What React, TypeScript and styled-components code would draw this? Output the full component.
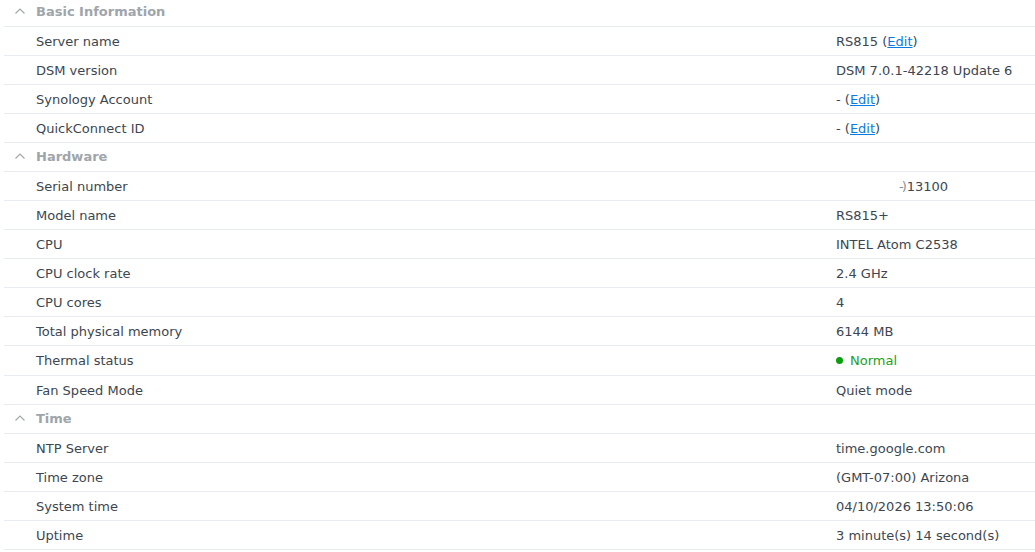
import React from "react";
import styled, { createGlobalStyle } from "styled-components";

const Global = createGlobalStyle`
  html, body { margin: 0; padding: 0; background: #ffffff; }
  body { font-family: "DejaVu Sans", Verdana, sans-serif; font-size: 13px; color: #3d4650; overflow: hidden; }
`;

const Page = styled.div`
  width: 1035px;
  height: 552px;
  overflow: hidden;
  background: #fff;
`;

const List = styled.div`
  margin-top: -2px;
  margin-left: 4px;
  display: flex;
  flex-direction: column;
`;

const Row = styled.div<{ $tall?: boolean }>`
  display: grid;
  grid-template-columns: 800px 1fr;
  align-items: center;
  height: ${(p) => (p.$tall ? "29px" : "28px")};
  padding-left: 32px;
  border-bottom: 1px solid #e7ebf0;
  white-space: nowrap;
`;

const GroupRow = styled.div`
  display: flex;
  align-items: center;
  height: 26px;
  padding-bottom: 2px;
  border-bottom: 1px solid #e7ebf0;
  padding-left: 11px;
  gap: 11px;
  font-weight: bold;
  color: #a0a5aa;
`;

const Chevron = styled.svg`
  width: 10px;
  height: 6px;
  flex: none;
`;

const Label = styled.span``;
const Value = styled.span`
  display: flex;
  align-items: center;
`;

const Link = styled.a`
  color: #0a7be0;
  text-decoration: underline;
  cursor: pointer;
`;

const Dot = styled.span`
  width: 7px;
  height: 7px;
  border-radius: 50%;
  background: #0aa00a;
  margin-right: 7px;
`;

const Status = styled.span`
  color: #1ca01c;
`;

const Redacted = styled.span`
  margin-left: 63px;
`;

const Partial = styled.span`
  color: #8a9098;
  letter-spacing: -2px;
  margin-right: 2px;
`;

const Group = ({ title }: { title: string }) => (
  <GroupRow>
    <Chevron viewBox="0 0 10 6">
      <path d="M0.5 5.5 L5 1 L9.5 5.5" fill="none" stroke="#a0a5aa" strokeWidth="1.1" />
    </Chevron>
    {title}
  </GroupRow>
);

const Item = ({ label, tall, children }: { label: string; tall?: boolean; children: React.ReactNode }) => (
  <Row $tall={tall}>
    <Label>{label}</Label>
    <Value>{children}</Value>
  </Row>
);

export default function App() {
  return (
    <Page>
      <Global />
      <List>
        <Group title="Basic Information" />
        <Item label="Server name">RS815&nbsp;(<Link>Edit</Link>)</Item>
        <Item label="DSM version">DSM 7.0.1-42218 Update 6</Item>
        <Item label="Synology Account">-&nbsp;(<Link>Edit</Link>)</Item>
        <Item label="QuickConnect ID">-&nbsp;(<Link>Edit</Link>)</Item>
        <Group title="Hardware" />
        <Item label="Serial number">
          <Redacted><Partial>-)</Partial>13100</Redacted>
        </Item>
        <Item label="Model name">RS815+</Item>
        <Item label="CPU">INTEL Atom C2538</Item>
        <Item label="CPU clock rate">2.4 GHz</Item>
        <Item label="CPU cores">4</Item>
        <Item label="Total physical memory">6144 MB</Item>
        <Item label="Thermal status" tall><Dot /><Status>Normal</Status></Item>
        <Item label="Fan Speed Mode">Quiet mode</Item>
        <Group title="Time" />
        <Item label="NTP Server">time.google.com</Item>
        <Item label="Time zone">(GMT-07:00) Arizona</Item>
        <Item label="System time">04/10/2026 13:50:06</Item>
        <Item label="Uptime">3 minute(s) 14 second(s)</Item>
      </List>
    </Page>
  );
}
